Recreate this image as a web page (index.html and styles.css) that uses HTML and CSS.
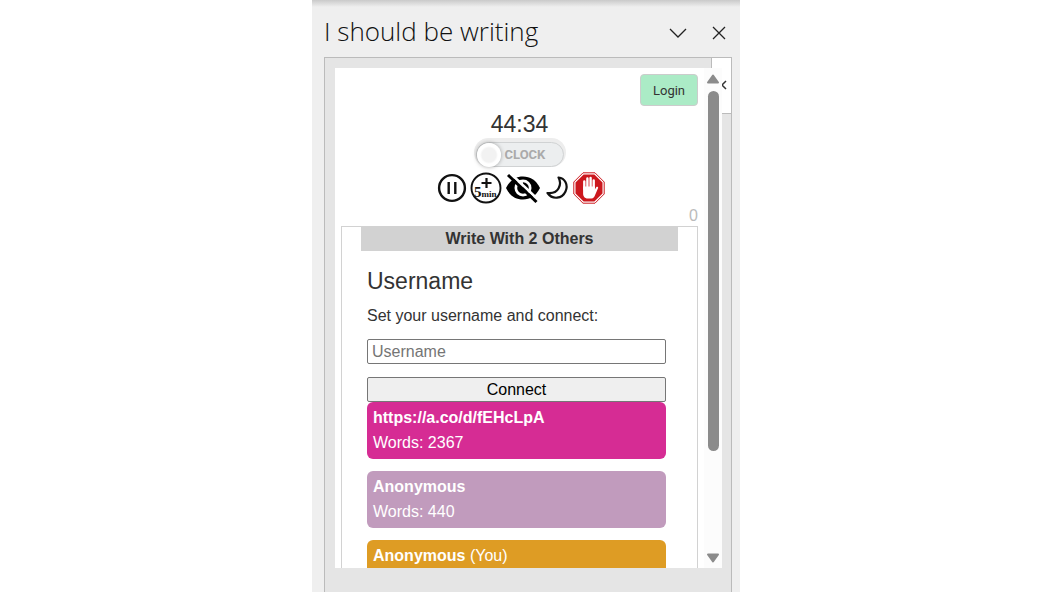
FILE: index.html
```html
<!DOCTYPE html>
<html lang="en">
<head>
    <meta charset="UTF-8">
    <title>I should be writing</title>
    <link rel="stylesheet" href="styles.css">
</head>
<body>

<div class="pane">
    <header class="pane-header">
        <h1>I should be writing</h1>
        <button class="pane-button" aria-label="Options">
            <svg width="20" height="14" viewBox="0 0 20 14"><path d="M2 3l8 8 8-8" fill="none" stroke="#222" stroke-width="1.3"/></svg>
        </button>
        <button class="pane-button" aria-label="Close">
            <svg width="14" height="14" viewBox="0 0 14 14"><path d="M1 1l12 12M13 1L1 13" fill="none" stroke="#222" stroke-width="1.3"/></svg>
        </button>
    </header>

    <div class="frame">
        <div class="tab">
            <svg width="10" height="10" viewBox="0 0 10 10"><path d="M7 1L3 5l4 4" fill="none" stroke="#333" stroke-width="1.5"/></svg>
        </div>

        <div class="app">
            <main class="content">
                <div class="top">
                    <button class="login">Login</button>
                </div>

                <div class="timer">44:34</div>

                <label class="switch">
                    <input type="checkbox" id="clock">
                    <span>CLOCK</span>
                </label>

                <div class="icons">
                    <button aria-label="Pause">
                        <svg width="30" height="32" viewBox="0 0 30 32">
                            <circle cx="15" cy="16" r="12.9" fill="none" stroke="#111" stroke-width="2.4"/>
                            <path d="M11.7 10v12M18.3 10v12" stroke="#111" stroke-width="2.4"/>
                        </svg>
                    </button>
                    <button aria-label="Add 5 minutes">
                        <svg width="32" height="32" viewBox="0 0 32 32">
                            <circle cx="16" cy="16" r="14.5" fill="none" stroke="#111" stroke-width="1.9"/>
                            <path d="M16.500 6v10M11.500 11h10" stroke="#111" stroke-width="2.2"/>
                            <text class="five" x="4" y="25">5<tspan class="min">min</tspan></text>
                        </svg>
                    </button>
                    <button aria-label="Hide words">
                        <svg width="36" height="32" viewBox="0 0 36 32">
                            <path d="M1 16C5 8 11 4.500 18 4.500S31 8 35 16C31 24 25 27.500 18 27.500S5 24 1 16z" fill="#000"/>
                            <circle cx="18" cy="16" r="8.500" fill="#fff"/>
                            <circle cx="18" cy="16" r="5.800" fill="#000"/>
                            <path d="M18 16v-6a6 6 0 0 0-5 4z" fill="#fff"/>
                            <path d="M5.500 1.500L34 28.500" stroke="#fff" stroke-width="2.600"/>
                            <path d="M3 3L31.500 30" stroke="#000" stroke-width="3"/>
                        </svg>
                    </button>
                    <button aria-label="Dark mode">
                        <svg width="26" height="32" viewBox="0 0 26 32">
                            <path d="M14.500 5.500C21 6 24.500 13 21.500 19.500C18 27 8.500 28 3.500 21C8 21.500 12.500 20 14.500 16.500C16.500 13 16.500 9 14.500 5.500z" fill="#fff" stroke="#111" stroke-width="2.200" stroke-linejoin="round"/>
                        </svg>
                    </button>
                    <button aria-label="Stop">
                        <svg width="32" height="32" viewBox="0 0 32 32">
                            <path d="M10 .8h12L31.200 10v12L22 31.200H10L.8 22V10z" fill="#fff" stroke="#cc181e" stroke-width="1"/>
                            <path d="M10.600 2.500h10.800l8.100 8.100v10.800l-8.100 8.100H10.600l-8.100-8.100V10.600z" fill="#cc181e"/>
                            <path d="M11.300 17V9.500M14.400 15V6.500M17.600 15V6M20.700 16V8.500" fill="none" stroke="#fff" stroke-width="2.400" stroke-linecap="round"/>
                            <path d="M10.100 14.500h11.800v3l1.300-2.300c.8-1 2.300-.3 1.900.9l-3 6.800c-.8 2-1.800 3.600-3.600 3.600h-3.800c-3 0-4.600-2.300-4.600-5z" fill="#fff"/>
                        </svg>
                    </button>
                </div>

                <div class="count">0</div>

                <section class="group">
                    <h2>Write With 2 Others</h2>
                    <div class="group-body">
                        <h3>Username</h3>
                        <label class="hint" for="username">Set your username and connect:</label>
                        <input type="text" id="username" class="username" placeholder="Username">
                        <button class="connect">Connect</button>

                        <div class="users">
                            <div class="user pink">
                                <div><b>https://a.co/d/fEHcLpA</b></div>
                                <div>Words: 2367</div>
                            </div>
                            <div class="user purple">
                                <div><b>Anonymous</b></div>
                                <div>Words: 440</div>
                            </div>
                            <div class="user orange">
                                <div><b>Anonymous</b> (You)</div>
                            </div>
                        </div>
                    </div>
                </section>
            </main>

            <div class="scrollbar">
                <svg width="14" height="10" viewBox="0 0 14 10"><path d="M7 1.500L12 8.500H2z" fill="#8b8b8b" stroke="#8b8b8b" stroke-width="2" stroke-linejoin="round"/></svg>
                <div class="thumb"></div>
                <svg width="14" height="10" viewBox="0 0 14 10"><path d="M7 8.500L2 1.500h10z" fill="#8b8b8b" stroke="#8b8b8b" stroke-width="2" stroke-linejoin="round"/></svg>
            </div>
        </div>
    </div>
</div>

</body>
</html>
```
FILE: styles.css
```css
* {
    box-sizing: border-box;
}
body {
    margin: 0;
    background-color: white;
    font-family: "Liberation Sans", Arial, sans-serif;
    font-size: 16px;
    color: #333;
}
h1, h2, h3 {
    margin: 0;
}
button {
    font-family: inherit;
}
svg {
    display: block;
}
.pane {
    display: flex;
    flex-direction: column;
    max-width: 428px;
    height: 100vh;
    margin: auto;
    padding: 0 8px 0 12px;
    overflow: hidden;
    background: linear-gradient(#cacaca, #efefef 7px);
}
.pane-header {
    display: flex;
    align-items: center;
    gap: 24px;
    padding: 11px 6px 6px 0;
}
.pane-header h1 {
    flex: 1;
    font-family: "Open Sans", sans-serif;
    font-size: 26px;
    font-weight: 300;
    line-height: 40px;
    color: #111;
}
.pane-button {
    padding: 0;
    border: none;
    background: none;
}
.pane-button svg {
    margin-top: 4px;
}

/* grey frame around the add-in */
.frame {
    position: relative;
    flex: 1;
    padding: 10px 9px 24px 10px;
    border: 1px solid #bbb;
    border-bottom: none;
    background-color: #e5e5e5;
}
.tab {
    position: absolute;
    top: 0;
    right: 0;
    width: 20px;
    height: 56px;
    padding: 22px 0 0 7px;
    border-left: 1px solid #bbb;
    border-bottom: 1px solid #bbb;
    background-color: white;
}
.app {
    position: relative;
    display: flex;
    height: calc(100vh - 92px);
    overflow: hidden;
    background-color: white;
}
.content {
    flex: 1;
    display: flex;
    flex-direction: column;
    padding: 6px 6px 0;
}
.top {
    display: flex;
    justify-content: flex-end;
}
.login {
    width: 58px;
    height: 32px;
    padding: 0;
    border: 1px solid #ccc;
    border-radius: 4px;
    background-color: #abebc6;
    font-family: Roboto, sans-serif;
    font-size: 13px;
    color: #333;
}
.timer {
    padding-top: 4px;
    font-size: 23px;
    line-height: 28px;
    text-align: center;
}

.switch {
    display: flex;
    align-items: center;
    align-self: center;
    gap: 4px;
    width: 88px;
    height: 25px;
    margin: 4px 0 5px;
    border: 1px solid #d0d2d3;
    border-radius: 13px;
    background-color: #eceeef;
    box-shadow: 0 -2px 0 2px #ededed;
    font-family: Roboto, sans-serif;
    font-size: 13px;
    font-weight: bold;
    color: #aaa;
}
.switch input {
    appearance: none;
    width: 24px;
    height: 24px;
    margin: 0;
    border-radius: 50%;
    background: radial-gradient(#f2f2f2 7px, white 9px);
    box-shadow: 0 0 4px rgba(0,0,0,0.35);
}

.icons {
    display: flex;
    justify-content: center;
    gap: 3px;
    padding-left: 3px;
}
.icons button {
    padding: 0;
    border: none;
    background: none;
}
.five {
    font-family: "Liberation Serif", serif;
    font-size: 15px;
    font-weight: bold;
    fill: #111;
}
.min {
    font-size: 9px;
}
.count {
    padding-top: 2px;
    line-height: 20px;
    text-align: right;
    color: #bbb;
}

.group {
    flex: 1;
    border: 1px solid #d2d2d2;
    border-bottom: none;
}
.group h2 {
    margin: 0 19px;
    background-color: #d2d2d2;
    font-size: 16px;
    line-height: 24px;
    text-align: center;
}
.group-body {
    padding: 16px 31px 0 25px;
}
.group h3 {
    font-size: 23px;
    font-weight: normal;
    line-height: 28px;
}
.hint {
    display: block;
    margin: 9px 0 11px;
    line-height: 24px;
}
.username, .connect {
    display: block;
    width: 100%;
    height: 25px;
    border: 1px solid #767676;
    border-radius: 2px;
    font-family: inherit;
    font-size: 16px;
}
.username {
    margin-bottom: 13px;
    padding: 0 4px;
}
.username::placeholder {
    color: #757575;
}
.connect {
    padding: 0;
    background-color: #efefef;
    color: black;
}
.users {
    display: flex;
    flex-direction: column;
    gap: 12px;
}
.user {
    min-height: 57px;
    padding: 3px 6px 4px;
    border-radius: 6px;
    line-height: 25px;
    color: white;
}
.pink {
    background-color: #d62c94;
}
.purple {
    background-color: #c19bbd;
}
.orange {
    background-color: #de9c24;
}

.scrollbar {
    display: flex;
    flex-direction: column;
    align-items: center;
    width: 18px;
    padding: 6px 0 5px;
    background-color: #fcfcfc;
}
.thumb {
    width: 11px;
    height: 360px;
    margin: 7px 0 auto;
    border-radius: 6px;
    background-color: #8b8b8b;
}
```
